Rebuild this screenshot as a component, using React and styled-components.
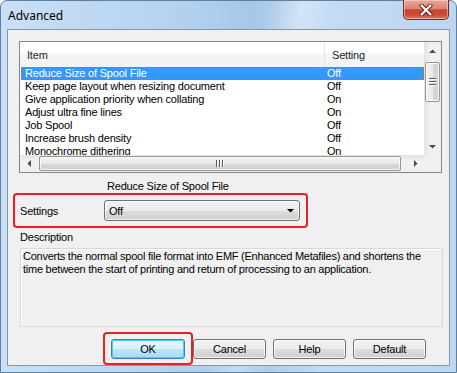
import React from "react";
import styled, { createGlobalStyle } from "styled-components";

const GlobalStyle = createGlobalStyle`
  html, body {
    margin: 0;
    padding: 0;
    background: #ffffff;
  }
  body {
    font-family: "Liberation Sans", Arial, sans-serif;
    font-size: 11px;
    letter-spacing: -0.2px;
    color: #000;
  }
`;

const Window = styled.div`
  width: 457px;
  height: 373px;
  box-sizing: border-box;
  border: 1px solid #61809f;
  border-radius: 7px 7px 0 0;
  padding: 0 6px 7px;
  display: flex;
  flex-direction: column;
  background:
    linear-gradient(100deg, rgba(255,255,255,0) 0%, rgba(255,255,255,0) 52%, rgba(255,255,255,0.35) 58%, rgba(255,255,255,0) 64%),
    linear-gradient(90deg, #c9dff5 0%, #bcd7f2 25%, #b0cfee 45%, #a7c7e8 55%, #c3dbf3 70%, #bed6f0 100%);
`;

const TitleBar = styled.div`
  height: 28px;
  display: flex;
  justify-content: space-between;
  align-items: flex-start;
  flex-shrink: 0;
`;

const Title = styled.div`
  margin: 7px 0 0 1px;
  font-family: "Noto Sans", "Open Sans", sans-serif;
  font-size: 12px;
  line-height: 16px;
  letter-spacing: 0;
  color: #000;
`;

const CloseButton = styled.div`
  width: 46px;
  height: 20px;
  box-sizing: border-box;
  margin: -1px 1px 0 0;
  border: 1px solid #6b2b22;
  border-top: none;
  border-radius: 0 0 5px 5px;
  background: linear-gradient(#e9a99b 0%, #dc8473 45%, #c8442f 52%, #cc4f39 80%, #e07a5f 100%);
  box-shadow: inset 0 0 0 1px rgba(255, 220, 210, 0.55);
  display: flex;
  align-items: center;
  justify-content: center;
`;

const Client = styled.div`
  flex: 1;
  box-sizing: border-box;
  border: 1px solid #8896a6;
  background: #f0f0f0;
  padding: 11px 6px 0 5px;
  display: flex;
  flex-direction: column;
`;

const ListView = styled.div`
  height: 132px;
  box-sizing: border-box;
  margin: 0 1px 0 6px;
  border: 1px solid #828790;
  background: #fff;
  display: grid;
  grid-template-columns: 1fr 17px;
  grid-template-rows: 1fr 17px;
  overflow: hidden;
`;

const ListContent = styled.div`
  overflow: hidden;
`;

const Header = styled.div`
  height: 25px;
  display: grid;
  grid-template-columns: 305px 1fr;
  background: linear-gradient(#ffffff 0%, #ffffff 45%, #f4f5f7 50%, #f1f2f4 100%);
`;

const HeaderCell = styled.div`
  display: flex;
  align-items: center;
  padding-left: ${(p) => p.$pad}px;
  border-right: ${(p) => (p.$divider ? "1px solid #e3e6ea" : "none")};
  color: #1e1e1e;
`;

const Row = styled.div`
  height: 13px;
  box-sizing: border-box;
  margin-left: 1px;
  display: grid;
  grid-template-columns: 303px 1fr;
  align-items: center;
  line-height: 11px;
  border: 1px solid ${(p) => (p.$selected ? "#b8782a" : "transparent")};
  background: ${(p) => (p.$selected ? "#3399ff" : "transparent")};
  color: ${(p) => (p.$selected ? "#fff" : "#000")};
  white-space: nowrap;
`;

const Cell = styled.div`
  padding-left: ${(p) => p.$pad}px;
`;

const VScroll = styled.div`
  display: flex;
  flex-direction: column;
  background: linear-gradient(90deg, #e3e3e3, #f2f2f2 40%, #eeeeee);
`;

const HScroll = styled.div`
  display: flex;
  background: linear-gradient(#e3e3e3, #f2f2f2 40%, #eeeeee);
`;

const ArrowBtn = styled.div`
  width: 17px;
  height: 17px;
  flex-shrink: 0;
  display: flex;
  align-items: center;
  justify-content: center;
`;

const Track = styled.div`
  flex: 1;
  display: flex;
  flex-direction: ${(p) => (p.$vertical ? "column" : "row")};
`;

const Thumb = styled.div`
  box-sizing: border-box;
  border: 1px solid #979797;
  border-radius: 2px;
  display: flex;
  align-items: center;
  justify-content: center;
  ${(p) =>
    p.$vertical
      ? `
    width: 15px;
    height: 40px;
    margin: 3px 1px 0;
    background: linear-gradient(90deg, #f4f4f4, #e9e9e9 50%, #d9d9d9 51%, #cfcfcf);
  `
      : `
    height: 15px;
    flex: 1;
    margin: 1px 6px 1px 2px;
    background: linear-gradient(#f4f4f4, #e9e9e9 50%, #d9d9d9 51%, #cfcfcf);
  `}
  box-shadow: inset 0 0 0 1px rgba(255, 255, 255, 0.8);
`;

const Grip = styled.div`
  display: flex;
  flex-direction: ${(p) => (p.$vertical ? "column" : "row")};
  gap: 1px;
`;

const GripLine = styled.div`
  background: #5a5a5a;
  border-${(p) => (p.$vertical ? "bottom" : "right")}: 1px solid #fff;
  ${(p) => (p.$vertical ? "width: 7px; height: 1px;" : "width: 1px; height: 7px;")}
`;

const Corner = styled.div`
  background: #f0f0f0;
`;

const ComboCaption = styled.div`
  margin: 7px 0 0 94px;
  line-height: 13px;
  height: 13px;
`;

const Highlight = styled.div`
  box-sizing: border-box;
  border: 2px solid #ee1c24;
  border-radius: 4px;
  display: flex;
  align-items: center;
  padding: ${(p) => p.$pad};
`;

const SettingsBox = styled(Highlight)`
  width: 295px;
  height: 35px;
`;

const FieldLabel = styled.div`
  width: 84px;
`;

const Combo = styled.div`
  width: 196px;
  height: 21px;
  box-sizing: border-box;
  border: 1px solid #707070;
  border-radius: 3px;
  background: linear-gradient(#f2f2f2 0%, #ebebeb 50%, #dddddd 51%, #cfcfcf 100%);
  box-shadow: inset 0 0 0 1px rgba(255, 255, 255, 0.7);
  display: flex;
  align-items: center;
  justify-content: space-between;
  padding: 0 5px 0 4px;
`;

const SectionLabel = styled.div`
  margin: 3px 0 0 7px;
  line-height: 13px;
  height: 13px;
`;

const DescriptionBox = styled.div`
  margin: 4px 0 0 7px;
  height: 79px;
  box-sizing: border-box;
  border: 1px solid #d5d9de;
  box-shadow: inset 1px 1px 0 #ffffff;
  padding: 1px 0 0 2px;
  line-height: 13px;
  letter-spacing: -0.25px;
  white-space: nowrap;
`;

const ButtonRow = styled.div`
  margin: 5px 0 0 90px;
  display: flex;
  align-items: flex-start;
  gap: 7px;
`;

const OkBox = styled(Highlight)`
  margin-right: -7px;
`;

const Button = styled.div`
  width: ${(p) => (p.$primary ? 74 : 73)}px;
  height: 20px;
  box-sizing: border-box;
  border: 1px solid ${(p) => (p.$primary ? "#3c7fb1" : "#707070")};
  border-radius: 3px;
  display: flex;
  align-items: center;
  justify-content: center;
  background: ${(p) =>
    p.$primary
      ? "linear-gradient(#eaf6fd 0%, #d9f0fc 50%, #bee6fd 51%, #a7d9f5 100%)"
      : "linear-gradient(#f2f2f2 0%, #ebebeb 50%, #dddddd 51%, #cfcfcf 100%)"};
  box-shadow: inset 0 0 0 1px ${(p) => (p.$primary ? "#48cfff" : "rgba(255,255,255,0.75)")};
`;

const ButtonSlot = styled.div`
  margin-top: 7px;
`;

const ArrowIcon = ({ dir, color = "#4a4a4a" }) => {
  const pts = {
    up: "0,4 7,4 3.5,0.5",
    down: "0,0 7,0 3.5,3.5",
    left: "4,0 4,7 0.5,3.5",
    right: "0,0 0,7 3.5,3.5",
  }[dir];
  const vert = dir === "up" || dir === "down";
  return (
    <svg width={vert ? 7 : 4} height={vert ? 4 : 7} viewBox={vert ? "0 0 7 4" : "0 0 4 7"}>
      <polygon points={pts} fill={color} />
    </svg>
  );
};

const CloseIcon = () => (
  <svg width="14" height="12" viewBox="0 0 14 12">
    <path d="M2.5 1.5 L11.5 10.5 M11.5 1.5 L2.5 10.5" stroke="#5a2018" strokeWidth="4" strokeLinecap="round" />
    <path d="M2.5 1.5 L11.5 10.5 M11.5 1.5 L2.5 10.5" stroke="#ffffff" strokeWidth="2.2" strokeLinecap="round" />
  </svg>
);

const rows = [
  ["Reduce Size of Spool File", "Off"],
  ["Keep page layout when resizing document", "Off"],
  ["Give application priority when collating", "On"],
  ["Adjust ultra fine lines", "On"],
  ["Job Spool", "Off"],
  ["Increase brush density", "Off"],
  ["Monochrome dithering", "On"],
];

const App = () => {
  const [selected] = React.useState(0);

  return (
    <>
      <GlobalStyle />
      <Window>
        <TitleBar>
          <Title>Advanced</Title>
          <CloseButton>
            <CloseIcon />
          </CloseButton>
        </TitleBar>
        <Client>
          <ListView>
            <ListContent>
              <Header>
                <HeaderCell $pad={7} $divider>Item</HeaderCell>
                <HeaderCell $pad={7}>Setting</HeaderCell>
              </Header>
              {rows.map(([name, value], i) => (
                <Row key={name} $selected={i === selected}>
                  <Cell $pad={3}>{name}</Cell>
                  <Cell $pad={2}>{value}</Cell>
                </Row>
              ))}
            </ListContent>
            <VScroll>
              <ArrowBtn>
                <ArrowIcon dir="up" />
              </ArrowBtn>
              <Track $vertical>
                <Thumb $vertical>
                  <Grip $vertical>
                    <GripLine $vertical />
                    <GripLine $vertical />
                    <GripLine $vertical />
                  </Grip>
                </Thumb>
              </Track>
              <ArrowBtn>
                <ArrowIcon dir="down" />
              </ArrowBtn>
            </VScroll>
            <HScroll>
              <ArrowBtn>
                <ArrowIcon dir="left" />
              </ArrowBtn>
              <Track>
                <Thumb>
                  <Grip>
                    <GripLine />
                    <GripLine />
                    <GripLine />
                  </Grip>
                </Thumb>
              </Track>
              <ArrowBtn>
                <ArrowIcon dir="right" />
              </ArrowBtn>
            </HScroll>
            <Corner />
          </ListView>

          <ComboCaption>Reduce Size of Spool File</ComboCaption>
          <SettingsBox $pad="0 6px 0 5px">
            <FieldLabel>Settings</FieldLabel>
            <Combo>
              <span>Off</span>
              <ArrowIcon dir="down" color="#000" />
            </Combo>
          </SettingsBox>

          <SectionLabel>Description</SectionLabel>
          <DescriptionBox>
            Converts the normal spool file format into EMF (Enhanced Metafiles) and shortens the
            <br />
            time between the start of printing and return of processing to an application.
          </DescriptionBox>

          <ButtonRow>
            <OkBox $pad="5px 6px 4px">
              <Button $primary>OK</Button>
            </OkBox>
            <ButtonSlot>
              <Button>Cancel</Button>
            </ButtonSlot>
            <ButtonSlot>
              <Button>Help</Button>
            </ButtonSlot>
            <ButtonSlot>
              <Button>Default</Button>
            </ButtonSlot>
          </ButtonRow>
        </Client>
      </Window>
    </>
  );
};

export default App;
